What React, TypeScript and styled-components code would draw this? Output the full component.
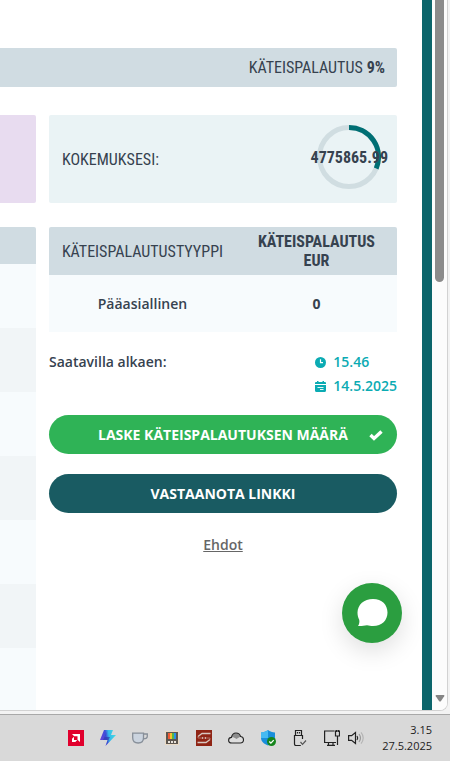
import React from "react";
import styled, { createGlobalStyle } from "styled-components";

const condensed = `"Roboto Condensed", "Liberation Sans Narrow", Roboto, sans-serif`;
const body = `"Open Sans", "Noto Sans", sans-serif`;

const GlobalStyle = createGlobalStyle`
  * { box-sizing: border-box; }
  body { margin: 0; background: #f3f3f3; color: #36424f; font: 600 14px/24px ${body}; }
  button { font: inherit; border: 0; cursor: pointer; }
`;

const Desktop = styled.div`
  height: 100vh;
  display: flex;
  flex-direction: column;
  overflow: hidden;
`;

const BrowserWindow = styled.div`
  flex: 1;
  min-height: 0;
  display: flex;
  margin: 0 2px 3px 0;
  background: #fff;
  border: solid #d2d2d2;
  border-width: 0 1px 1px 0;
  border-bottom-right-radius: 8px;
  overflow: hidden;
`;

const Page = styled.main`
  flex: 1;
  min-width: 0;
  position: relative;
  padding: 48px 25px 0 0;
  overflow: hidden;
`;

const SideStripe = styled.div`
  flex: 0 0 10px;
  background: #0b656b;
`;

const ScrollTrack = styled.div`
  flex: 0 0 15px;
  background: #fcfcfc;
  display: flex;
  flex-direction: column;
  justify-content: space-between;
  align-items: center;
  padding-bottom: 8px;
`;

const ScrollThumb = styled.div`
  width: 9px;
  height: 282px;
  background: #8b8b8b;
  border-radius: 0 0 5px 5px;
`;

const CashbackBar = styled.div`
  height: 39px;
  margin-bottom: 28px;
  padding: 0 12px;
  display: flex;
  align-items: center;
  justify-content: flex-end;
  gap: 4px;
  background: #d0dce2;
  border-radius: 0 2px 2px 0;
  font: 400 16px/19px ${condensed};
`;

const Columns = styled.div`
  display: grid;
  grid-template-columns: 36px minmax(0, 1fr);
  gap: 13px;
`;

const Column = styled.section`
  display: flex;
  flex-direction: column;
`;

const Card = styled.div<{ $tone: string; $cut?: boolean }>`
  height: 88px;
  margin-bottom: 24px;
  padding: 0 9px 0 13px;
  display: flex;
  align-items: center;
  justify-content: space-between;
  background: ${(p) => p.$tone};
  border-radius: ${(p) => (p.$cut ? "0 2px 2px 0" : "2px")};
  font: 400 16px/19px ${condensed};
`;

const Gauge = styled.div`
  display: grid;
  place-items: center;
  padding-bottom: 4px;
  > * { grid-area: 1 / 1; }
  > strong { z-index: 1; }
`;

const ListHeader = styled.div`
  height: 37px;
  background: #d0dce2;
  border-radius: 0 2px 0 0;
`;

const ListRow = styled.div`
  height: 64px;
  background: #f1f5f7;
  &:nth-child(odd) { background: #f7fbfd; }
`;

const Table = styled.table`
  width: 100%;
  table-layout: fixed;
  border-collapse: collapse;
  text-align: center;
`;

const HeadCell = styled.th<{ $bold?: boolean; $wide?: boolean }>`
  width: ${(p) => (p.$wide ? "54%" : "46%")};
  height: 48px;
  padding: ${(p) => (p.$wide ? "0 9px 0 8px" : "0 21px 0 20px")};
  background: #d0dce2;
  font: ${(p) => (p.$bold ? 700 : 400)} 16px/19px ${condensed};
  &:first-child { border-top-left-radius: 2px; }
  &:last-child { border-top-right-radius: 2px; }
`;

const Cell = styled.td<{ $bold?: boolean }>`
  height: 57px;
  padding: 0 9px 0 8px;
  background: #f7fbfd;
  font-weight: ${(p) => (p.$bold ? 700 : 600)};
`;

const Availability = styled.div`
  display: flex;
  justify-content: space-between;
  margin: 18px 0 17px;
`;

const Moments = styled.div`
  color: #0babb3;
`;

const Moment = styled.div`
  display: flex;
  align-items: center;
  gap: 7px;
`;

const PillButton = styled.button<{ $tone: string }>`
  height: 39px;
  margin-bottom: 20px;
  padding: 0 14px;
  display: grid;
  grid-template-columns: 14px 1fr 14px;
  align-items: center;
  border-radius: 20px;
  background: ${(p) => p.$tone};
  color: #fff;
  && { font-weight: 700; }
  > span { grid-column: 2; white-space: nowrap; }
`;

const TermsLink = styled.a`
  align-self: center;
  color: #666;
  text-decoration: underline;
`;

const ChatButton = styled.button`
  position: absolute;
  right: 20px;
  bottom: 67px;
  width: 60px;
  height: 60px;
  padding: 0;
  display: grid;
  place-items: center;
  border-radius: 50%;
  background: #2b9e40;
  box-shadow: 0 8px 24px rgba(0, 0, 0, 0.13);
`;

const Taskbar = styled.footer`
  flex: 0 0 47px;
  display: flex;
  align-items: center;
  justify-content: flex-end;
  padding-right: 18px;
  background: #d9d9d9;
  border-top: 1px solid #a8a8a8;
  color: #1c1c1c;
`;

const Tray = styled.div`
  display: flex;
  align-items: center;
  gap: 16px;
  margin-right: 18px;
`;

const TrayButton = styled.button<{ $tight?: boolean }>`
  width: 16px;
  height: 16px;
  padding: 0;
  display: block;
  background: none;
  margin-left: ${(p) => (p.$tight ? "-8px" : "0")};
  > svg { display: block; }
`;

const Clock = styled.time`
  font: 400 11px/16px ${body};
  text-align: right;
`;

const svg16 = { width: 16, height: 16, viewBox: "0 0 16 16", fill: "none" };

const trayItems: { name: string; tight?: boolean; art: React.ReactNode }[] = [
  {
    name: "AMD Software",
    art: (
      <svg {...svg16}>
        <path d="M0 0h16v16H0z" fill="#e1002d" />
        <path d="M4 4h8v8L9.500 9.700V6.300H6.200z" fill="#fff" />
        <path d="M6 6.700 4 8.700V12h3.300l2-2H6z" fill="#fff" />
      </svg>
    ),
  },
  {
    name: "Lightning",
    art: (
      <svg {...svg16}>
        <defs>
          <linearGradient id="bolt" x1="0" y1="9" x2="16" y2="6" gradientUnits="userSpaceOnUse">
            <stop stopColor="#6840d8" />
            <stop offset=".4" stopColor="#3d50d8" />
            <stop offset=".58" stopColor="#35b9e8" />
            <stop offset="1" stopColor="#42dde5" />
          </linearGradient>
        </defs>
        <path d="M4 0h9l-2 5h5L5.500 16l2-6H0z" fill="url(#bolt)" />
        <path d="m8 0-3 7h5l-4 8 2-5H3z" fill="#3039ae" opacity=".65" />
      </svg>
    ),
  },
  {
    name: "Caffeine",
    art: (
      <svg {...svg16} stroke="#878f99" strokeWidth="1.3">
        <path d="M.7 3.200h10.800v4.500c0 3.700-2 5.300-5.300 5.300S.7 11.300.7 7.700z" fill="#cbd4df" />
        <path d="M11.500 4h3.800v2.300c0 1.700-1.200 2.600-4 2.600" />
      </svg>
    ),
  },
  {
    name: "PowerToys",
    art: (
      <svg {...svg16}>
        <path d="M1 1h14v14H1z" fill="#eadac5" />
        <path d="M2 2h12v12H2z" fill="#5d5750" />
        <path d="M4 3h2v6H4z" fill="#f05a35" />
        <path d="M6 3h2v6H6z" fill="#f8c02a" />
        <path d="M8 3h2v6H8z" fill="#56b947" />
        <path d="M10 3h2v6h-2z" fill="#2b91e8" />
        <path d="M4 11h2v2H4zM7 11h2v2H7zM10 11h2v2h-2z" fill="#e9e3dc" />
      </svg>
    ),
  },
  {
    name: "Audio",
    art: (
      <svg {...svg16}>
        <path d="M0 0h16v16H0z" fill="#8f2414" />
        <path d="M14.500 3.500H6L2 6.500M1.500 12.500H10l4-3" stroke="#d8c7c0" strokeWidth="1.3" />
        <path d="M2 6.500v1.500h12v1.500" stroke="#b98075" strokeWidth=".8" />
        <path d="M6.500 7v2M9.500 7v2" stroke="#cfada5" />
      </svg>
    ),
  },
  {
    name: "OneDrive",
    art: (
      <svg {...svg16}>
        <path d="M3.700 13C1.700 13 .6 11.700.6 10.200c0-1.600 1.200-2.700 2.800-2.800C4 4.700 5.800 3 8 3s4 1.400 4.600 3.500c1.800.2 2.900 1.500 2.900 3.200 0 1.900-1.300 3.300-3.200 3.300z" fill="#dedede" />
        <path d="M3.400 7.400C4.500 3.500 8 1.800 11 4.400l1.600 2.200-4.200 2.500c-1.500-1.300-3-1.900-5-1.700z" fill="#8d8d8d" />
        <path d="M3.700 13C1.700 13 .6 11.700.6 10.200c0-1.600 1.200-2.700 2.800-2.800C4 4.700 5.800 3 8 3s4 1.400 4.600 3.500c1.800.2 2.900 1.500 2.900 3.200 0 1.900-1.300 3.300-3.200 3.300z" stroke="#252525" strokeWidth="1.1" />
      </svg>
    ),
  },
  {
    name: "Windows Security",
    art: (
      <svg {...svg16}>
        <path d="M8 0c2 1.700 4.300 2.400 7 2.500V8c0 3-2.500 5.700-7 7.500C3.500 13.700 1 11 1 8V2.500C3.700 2.400 6 1.700 8 0z" fill="#198edb" />
        <path d="M8 0v8H1V2.500C3.700 2.400 6 1.700 8 0z" fill="#45baf2" />
        <circle cx="11.5" cy="11.5" r="4.5" fill="#16851c" />
        <path d="m9.300 11.500 1.600 1.600 2.800-3" stroke="#fff" strokeWidth="1.3" />
      </svg>
    ),
  },
  {
    name: "Safely remove hardware",
    art: (
      <svg {...svg16} stroke="#222" strokeWidth="1.2">
        <path d="M10.500 9V5.500h-8v8.600c0 .9.4 1.400 1.300 1.400h5M3.500 5.500v-5h6v5M5.500 2v1.500M7.500 2v1.500" />
        <path d="m8.500 12 2 2.300L14 10.500" stroke="#555" />
      </svg>
    ),
  },
  {
    name: "Network",
    art: (
      <svg {...svg16} stroke="#222" strokeWidth="1.2">
        <path d="M10.500 1H.6v11.500H12M4.500 12.500v2.500M9 12.500v2.500M3 15.300h8M11.500 1h4v5h-4zM13.500 6v9M12.500 0v2M14.500 0v2" />
      </svg>
    ),
  },
  {
    name: "Volume",
    tight: true,
    art: (
      <svg {...svg16} stroke="#222" strokeWidth="1.2">
        <path d="M.6 5.700h3L7.500 2.500v11l-3.900-3.200h-3zM9 6c.9 1.200.9 2.800 0 4" />
        <path d="M11 4c1.700 2.300 1.700 5.700 0 8" stroke="#999" />
        <path d="M13 2.300c2.900 3.200 2.900 8.200 0 11.400" stroke="#b5b5b5" />
      </svg>
    ),
  },
];

export default function App() {
  return (
    <Desktop>
      <GlobalStyle />
      <BrowserWindow>
        <Page>
          <CashbackBar>
            KÄTEISPALAUTUS <strong>9%</strong>
          </CashbackBar>
          <Columns>
            <Column>
              <Card $tone="#e8dcf0" $cut />
              <ListHeader />
              {Array.from({ length: 7 }, (_, i) => (
                <ListRow key={i} />
              ))}
            </Column>
            <Column>
              <Card $tone="#eaf3f5">
                <span>KOKEMUKSESI:</span>
                <Gauge>
                  <svg width="64" height="64" viewBox="0 0 64 64" fill="none" strokeWidth="5">
                    <circle cx="32" cy="32" r="29.5" stroke="#d0dde1" />
                    <path d="M32 2.500A29.500 29.500 0 0 1 59.200 43.500" stroke="#006f74" />
                  </svg>
                  <strong>4775865.99</strong>
                </Gauge>
              </Card>
              <Table>
                <thead>
                  <tr>
                    <HeadCell $wide>KÄTEISPALAUTUSTYYPPI</HeadCell>
                    <HeadCell $bold>KÄTEISPALAUTUS EUR</HeadCell>
                  </tr>
                </thead>
                <tbody>
                  <tr>
                    <Cell>Pääasiallinen</Cell>
                    <Cell $bold>0</Cell>
                  </tr>
                </tbody>
              </Table>
              <Availability>
                <span>Saatavilla alkaen:</span>
                <Moments>
                  <Moment>
                    <svg width="11" height="11" viewBox="0 0 11 11">
                      <circle cx="5.5" cy="5.5" r="5.5" fill="currentColor" />
                      <path d="M5.500 2.200v3.500H8" fill="none" stroke="#fff" strokeWidth="1.2" />
                    </svg>
                    <time>15.46</time>
                  </Moment>
                  <Moment>
                    <svg width="11" height="11" viewBox="0 0 11 11">
                      <path d="M0 3V2q0-1 1-1h1V0h1.500v1h4V0H9v1h1q1 0 1 1v1zM0 4h11v5.500Q11 11 9.500 11h-8Q0 11 0 9.500z" fill="currentColor" />
                      <path d="M2.500 6.500h6M5 8.500h3.500" stroke="#fff" strokeWidth=".9" />
                    </svg>
                    <time>14.5.2025</time>
                  </Moment>
                </Moments>
              </Availability>
              <PillButton $tone="#2fb356">
                <span>LASKE KÄTEISPALAUTUKSEN MÄÄRÄ</span>
                <svg width="14" height="14" viewBox="0 0 14 14" fill="none">
                  <path d="m1.500 7 3.500 3.500 7.500-7" stroke="#fff" strokeWidth="3.4" />
                </svg>
              </PillButton>
              <PillButton $tone="#195b62">
                <span>VASTAANOTA LINKKI</span>
              </PillButton>
              <TermsLink href="#ehdot">Ehdot</TermsLink>
            </Column>
          </Columns>
          <ChatButton aria-label="Chat">
            <svg width="32" height="30" viewBox="0 0 32 30" fill="#fff">
              <path d="M17 1c9 0 14.500 5.800 14.500 13.500S26 28 17 28c-2.300 0-4-.8-6-.8-3 0-5.500 1.300-9 .8 1.200-1.700 1.700-4 1.200-6.300C2 19.600 1.500 17 1.500 14.500 1.500 6.800 8 1 17 1z" />
            </svg>
          </ChatButton>
        </Page>
        <SideStripe />
        <ScrollTrack>
          <ScrollThumb />
          <svg width="10" height="8" viewBox="0 0 10 8">
            <path d="M1.500 1h7q1.500 0 .7 1.300L6 7Q5 8 4 7L.8 2.300Q0 1 1.500 1z" fill="#858585" />
          </svg>
        </ScrollTrack>
      </BrowserWindow>
      <Taskbar>
        <Tray>
          {trayItems.map((item) => (
            <TrayButton key={item.name} $tight={item.tight} aria-label={item.name}>
              {item.art}
            </TrayButton>
          ))}
        </Tray>
        <Clock>
          3.15
          <br />
          27.5.2025
        </Clock>
      </Taskbar>
    </Desktop>
  );
}
